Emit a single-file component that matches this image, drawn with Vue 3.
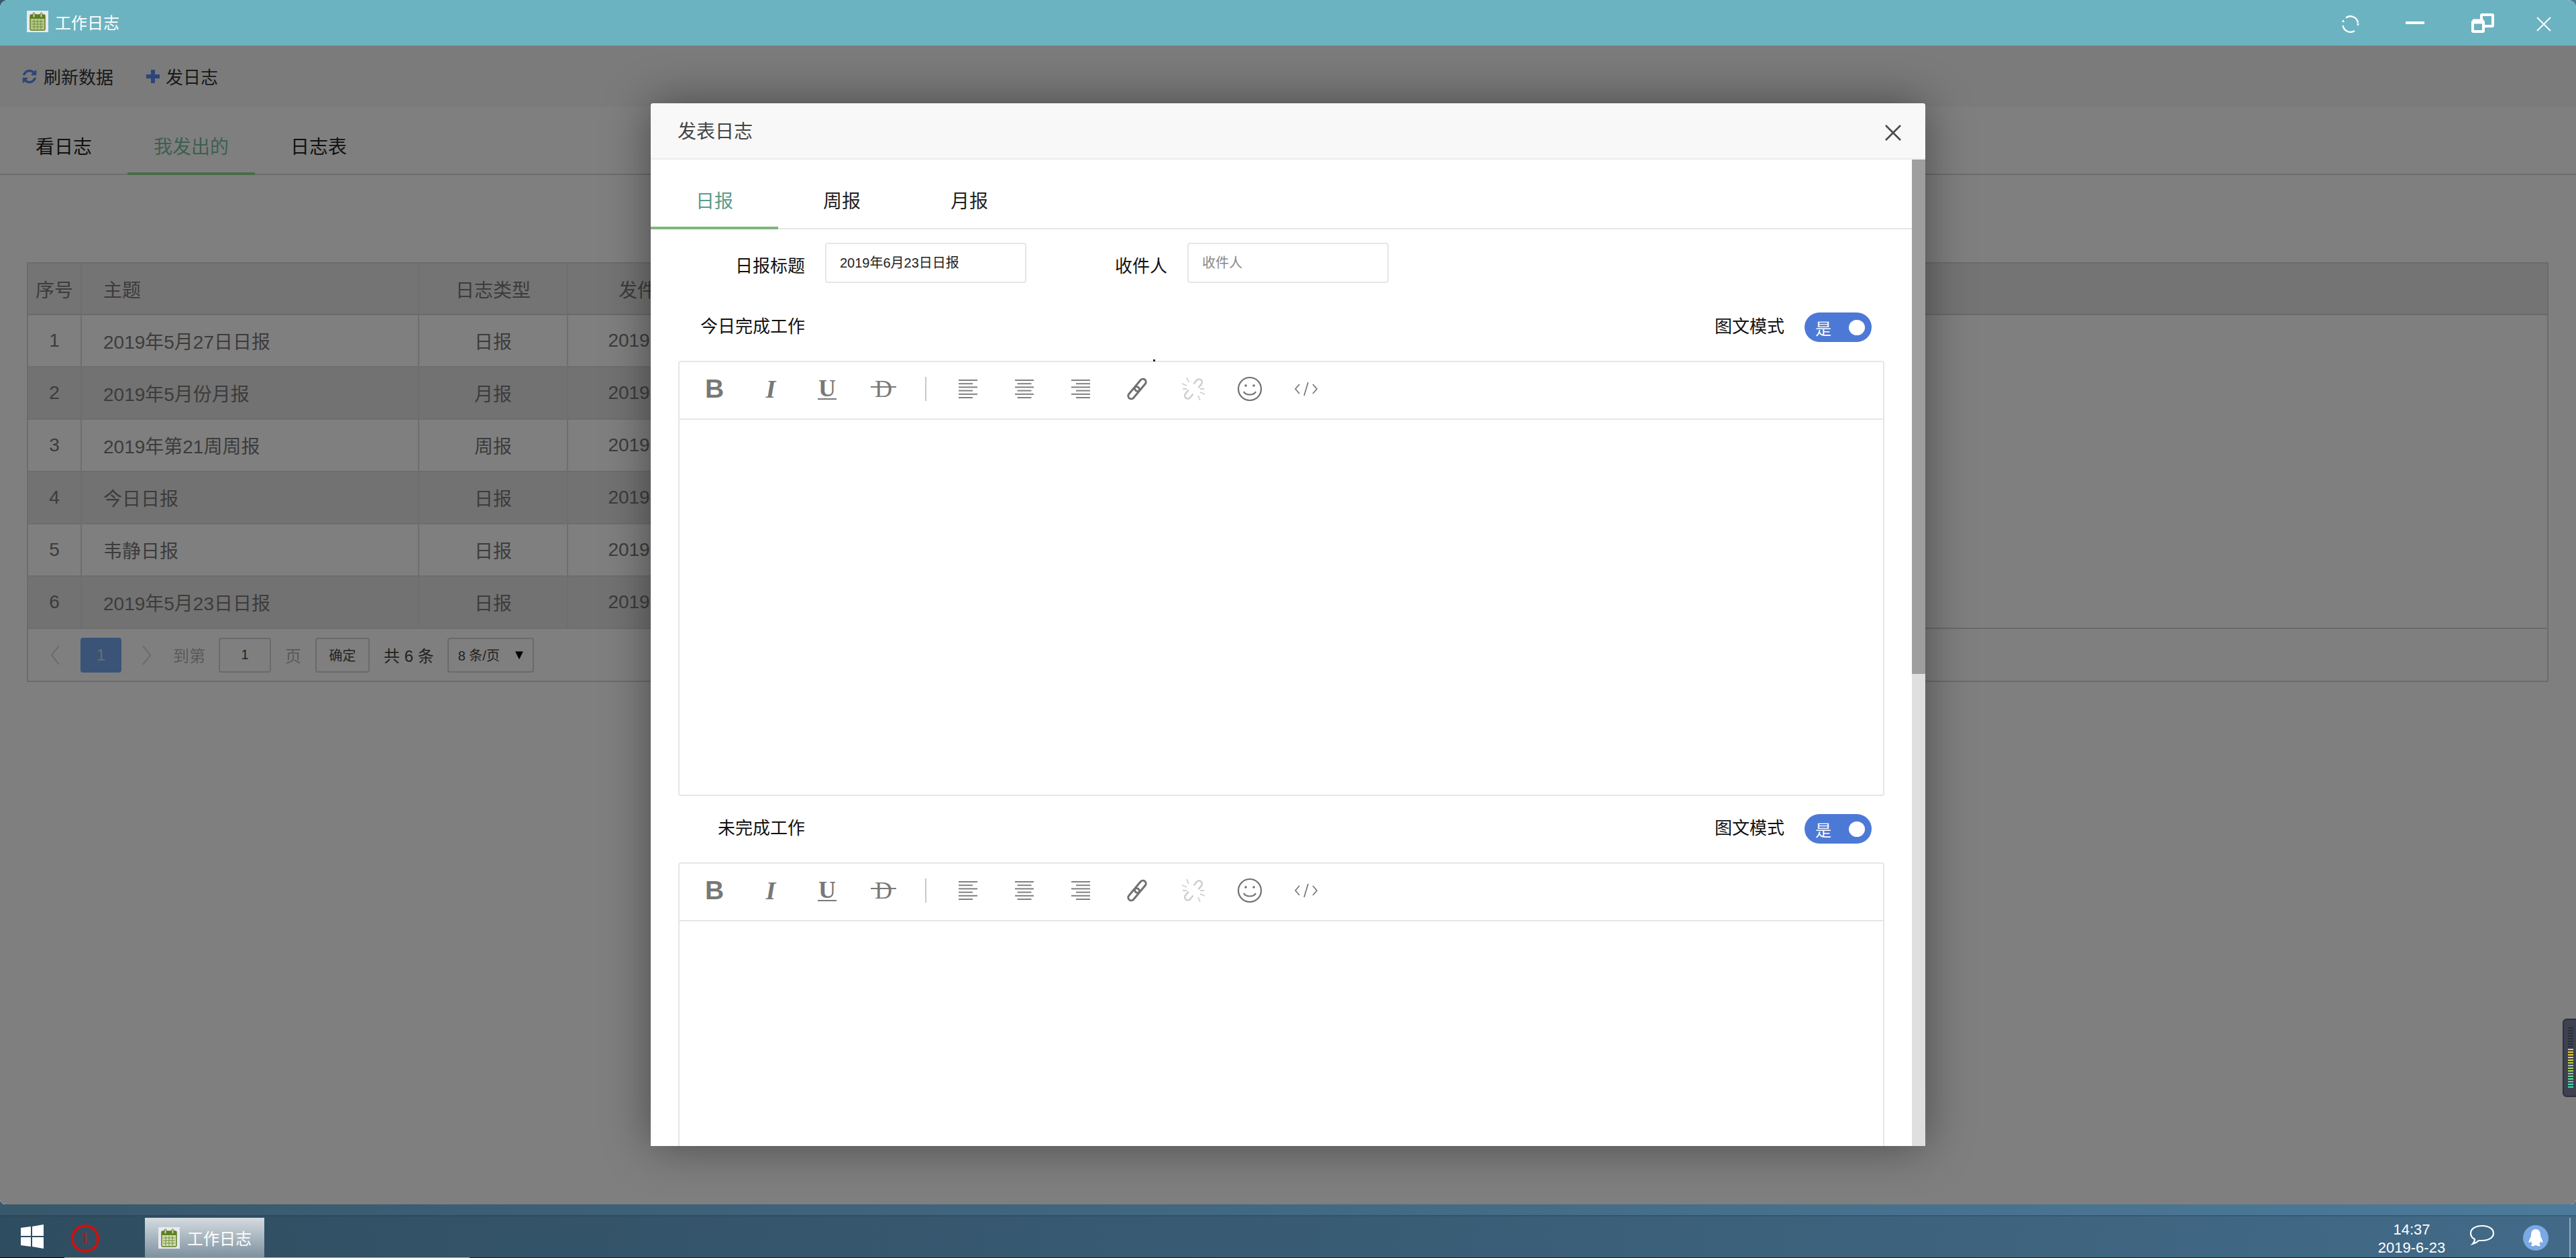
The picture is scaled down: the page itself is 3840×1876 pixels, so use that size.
<script setup>
const rows = [
  { n: 1, title: '2019年5月27日日报', type: '日报', date: '2019-05-27' },
  { n: 2, title: '2019年5月份月报', type: '月报', date: '2019-06-01' },
  { n: 3, title: '2019年第21周周报', type: '周报', date: '2019-05-24' },
  { n: 4, title: '今日日报', type: '日报', date: '2019-05-24' },
  { n: 5, title: '韦静日报', type: '日报', date: '2019-05-23' },
  { n: 6, title: '2019年5月23日日报', type: '日报', date: '2019-05-23' }
]
const editors = [
  { label: '今日完成工作' },
  { label: '未完成工作' }
]
const alignLines = [0, 1, 2, 3, 4, 5]
const lineX = (kind, i) => {
  const short = i % 2 === 1
  const w = short ? 21 : 28
  if (kind === 'left') return [6, 6 + w]
  if (kind === 'right') return [34 - w, 34]
  return [20 - w / 2, 20 + w / 2]
}
const meterBars = Array.from({ length: 23 }, (_, i) => {
  if (i < 8) return '#2c2e38'
  if (i < 13) return '#e8cf3e'
  if (i < 17) return '#a6d65c'
  if (i < 20) return '#6fd88c'
  return '#45dcb4'
})
const refreshPath = 'M1639 1056q0 5-1 7-64 268-268 434.5t-478 166.5q-146 0-282.5-55t-243.5-157l-129 129q-19 19-45 19t-45-19-19-45v-448q0-26 19-45t45-19h448q26 0 45 19t19 45-19 45l-137 137q71 66 161 102t187 36q134 0 250-65t186-179q11-17 53-117 8-23 30-23h192q13 0 22.5 9.5t9.5 22.5zm25-800v448q0 26-19 45t-45 19h-448q-26 0-45-19t-19-45 19-45l138-138q-148-137-349-137-134 0-250 65t-186 179q-11 17-53 117-8 23-30 23h-199q-13 0-22.5-9.5t-9.5-22.5v-7q65-268 270-434.5t480-166.5q146 0 284 55.5t245 156.5l130-129q19-19 45-19t45 19 19 45z'
</script>

<template>
  <div class="desktop">
    <div class="window">
      <header class="titlebar">
        <svg class="cal" viewBox="0 0 32 32">
          <rect width="32" height="32" fill="#e9e9ef" />
          <rect x="5" y="6" width="22" height="23" rx="2" fill="#b9c98f" stroke="#5c7f25" stroke-width="1.5" />
          <rect x="5" y="6" width="22" height="6" fill="#5c7f25" />
          <rect x="9" y="3" width="3" height="7" rx="1.5" fill="#c8d6a0" stroke="#5c7f25" />
          <rect x="20" y="3" width="3" height="7" rx="1.5" fill="#c8d6a0" stroke="#5c7f25" />
          <path d="M7 16h18M7 20h18M7 24h18M11 13v15M16 13v15M21 13v15" stroke="#6f8f3a" stroke-width="1" fill="none" />
        </svg>
        <span class="app-name">工作日志</span>
        <div class="win-btns">
          <div class="win-btn">
            <svg width="32" height="32" viewBox="0 0 32 32" class="win-refresh" fill="none" stroke="#fff" stroke-width="2.400">
              <path d="M27 14A11.500 11.500 0 0 0 9 6.500" />
              <path d="M4.500 18A11.500 11.500 0 0 0 22 26" />
              <path d="M25 15l2 4 2-4zM3 13l2-4 2 4z" fill="#fff" stroke="none" />
            </svg>
          </div>
          <div class="win-btn"><span class="min-bar"></span></div>
          <div class="win-btn">
            <svg width="48" height="48" viewBox="0 0 48 48" fill="none" stroke="#fff" stroke-width="4">
              <rect x="27" y="12" width="17" height="17" rx="1" />
              <rect x="14" y="22" width="16" height="15" rx="1" fill="#6cb3c1" />
              <path d="M14 22h16" stroke-width="7" />
            </svg>
          </div>
          <div class="win-btn">
            <svg width="24" height="24" viewBox="0 0 24 24" stroke="#fff" stroke-width="1.800" fill="none" class="win-close">
              <path d="M2 2l20 20M22 2L2 22" />
            </svg>
          </div>
        </div>
      </header>

      <div class="main">
        <div class="toolbar">
          <button class="tool">
            <svg class="tool-ico" width="24" height="24" viewBox="0 0 1792 1792"><path :d="refreshPath" fill="#5a8af0" /></svg>
            刷新数据
          </button>
          <button class="tool add">
            <svg class="tool-ico" width="22" height="22" viewBox="0 0 22 22"><path d="M8 1h6v7h7v6h-7v7H8v-7H1V8h7z" fill="#5a8af0" /></svg>
            发日志
          </button>
        </div>

        <nav class="page-tabs">
          <a class="page-tab">看日志</a>
          <a class="page-tab active">我发出的</a>
          <a class="page-tab">日志表</a>
        </nav>

        <section class="table">
          <div class="t-row t-head">
            <div class="cell c-n">序号</div>
            <div class="cell c-t">主题</div>
            <div class="cell c-y">日志类型</div>
            <div class="cell c-d">发件时间</div>
          </div>
          <div v-for="r in rows" :key="r.n" class="t-row" :class="{ even: r.n % 2 === 0 }">
            <div class="cell c-n">{{ r.n }}</div>
            <div class="cell c-t">{{ r.title }}</div>
            <div class="cell c-y">{{ r.type }}</div>
            <div class="cell c-d">{{ r.date }}</div>
          </div>
          <footer class="pager">
            <svg class="chev chev-prev" width="16" height="32" viewBox="0 0 16 32" fill="none" stroke="#d2d2d2" stroke-width="2"><path d="M14 2L3 16l11 14" /></svg>
            <span class="pg-cur">1</span>
            <svg class="chev chev-next" width="16" height="32" viewBox="0 0 16 32" fill="none" stroke="#d2d2d2" stroke-width="2"><path d="M2 2l11 14L2 30" /></svg>
            <span class="pg-txt to">到第</span>
            <span class="pg-box pg-in">1</span>
            <span class="pg-txt ye">页</span>
            <span class="pg-box pg-ok">确定</span>
            <span class="pg-total">共 6 条</span>
            <span class="pg-box pg-sel">8 条/页<i class="arrow">▼</i></span>
          </footer>
        </section>

        <div class="overlay"></div>

        <div class="modal">
          <div class="m-head">
            <span class="m-title">发表日志</span>
            <svg class="m-close" width="26" height="26" viewBox="0 0 26 26" fill="none" stroke="#4a4a4a" stroke-width="2.600"><path d="M2 2l22 22M24 2L2 24" /></svg>
          </div>
          <div class="m-body">
            <div class="m-scroll">
              <nav class="m-tabs">
                <a class="m-tab active">日报</a>
                <a class="m-tab">周报</a>
                <a class="m-tab">月报</a>
              </nav>
              <div class="form-row">
                <label class="f-label">日报标题</label>
                <div class="f-input">2019年6月23日日报</div>
                <label class="f-label second">收件人</label>
                <div class="f-input ph">收件人</div>
              </div>
              <div v-for="(e, i) in editors" :key="e.label" class="ed-block" :class="{ lead: i === 0 }">
                <div class="ed-head">
                  <label class="f-label">{{ e.label }}</label>
                  <span class="mode">图文模式</span>
                  <span class="toggle">
                    <b>是</b><i class="knob"></i>
                  </span>
                </div>
                <div class="editor">
                  <div class="ed-tools">
                    <span class="ti"><span class="g g-b">B</span></span>
                    <span class="ti"><span class="g g-i">I</span></span>
                    <span class="ti"><span class="g g-u">U</span></span>
                    <span class="ti"><span class="g g-d">D</span></span>
                    <span class="sep"></span>
                    <span v-for="k in ['left', 'center', 'right']" :key="k" class="ti">
                      <svg width="40" height="40" viewBox="0 0 40 40" stroke="#808080" stroke-width="2">
                        <line v-for="n in alignLines" :key="n" :x1="lineX(k, n)[0]" :x2="lineX(k, n)[1]" :y1="7 + n * 5.2" :y2="7 + n * 5.2" />
                      </svg>
                    </span>
                    <span class="ti">
                      <svg width="40" height="40" viewBox="0 0 40 40" fill="none" stroke="#707070" stroke-width="3">
                        <g transform="rotate(40 20 20)">
                          <rect x="15.500" y="2" width="9" height="21" rx="4.500" />
                          <rect x="15.500" y="17" width="9" height="21" rx="4.500" />
                        </g>
                      </svg>
                    </span>
                    <span class="ti">
                      <svg width="40" height="40" viewBox="0 0 40 40" fill="none" stroke="#cfcfcf" stroke-width="2.600">
                        <g transform="rotate(40 20 20)">
                          <path d="M15.500 14V7a4.500 4.500 0 0 1 9 0v7" />
                          <path d="M15.500 26v7a4.500 4.500 0 0 0 9 0v-7" />
                        </g>
                        <path d="M10 3l3 7M3 12l7 3M4 20h6M30 37l-3-7M37 28l-7-3M36 20h-6" stroke-width="1.800" />
                      </svg>
                    </span>
                    <span class="ti">
                      <svg width="40" height="40" viewBox="0 0 40 40" fill="none" stroke="#707070" stroke-width="2.200">
                        <circle cx="20" cy="20" r="17" />
                        <circle cx="14" cy="15" r="1.800" fill="#707070" stroke="none" />
                        <circle cx="26" cy="15" r="1.800" fill="#707070" stroke="none" />
                        <path d="M11 24c3 6 15 6 18 0" />
                      </svg>
                    </span>
                    <span class="ti">
                      <svg width="40" height="40" viewBox="0 0 40 40" fill="none" stroke="#707070" stroke-width="1.600">
                        <path d="M10 13l-6 7 6 7M30 13l6 7-6 7M23 10l-6 20" />
                      </svg>
                    </span>
                  </div>
                  <div class="ed-area"></div>
                </div>
              </div>
            </div>
            <div class="scrollbar"><div class="thumb"></div></div>
          </div>
          <i class="speck"></i>
        </div>
      </div>
    </div>

    <footer class="taskbar">
      <div class="strip"></div>
      <div class="task-row">
        <svg class="win-logo" width="34" height="36" viewBox="0 0 34 36" fill="#fff"><path d="M0 5l15-2v14H0zM17 3l17-3v17H17zM0 19h15v14L0 31zM17 19h17v17l-17-3z" /></svg>
        <span class="notice">1</span>
        <div class="task-app">
          <svg class="cal small" viewBox="0 0 32 32">
            <rect width="32" height="32" fill="#e9e9ef" />
            <rect x="5" y="6" width="22" height="23" rx="2" fill="#d5ddb5" stroke="#5c7f25" stroke-width="1.500" />
            <rect x="5" y="6" width="22" height="6" fill="#5c7f25" />
            <rect x="9" y="3" width="3" height="7" rx="1.500" fill="#c8d6a0" stroke="#5c7f25" />
            <rect x="20" y="3" width="3" height="7" rx="1.500" fill="#c8d6a0" stroke="#5c7f25" />
            <path d="M7 16h18M7 20h18M7 24h18M11 13v15M16 13v15M21 13v15" stroke="#6f8f3a" stroke-width="1" fill="none" />
          </svg>
          <span>工作日志</span>
        </div>
        <div class="clock"><div>14:37</div><div>2019-6-23</div></div>
        <svg class="bubble" width="38" height="32" viewBox="0 0 38 32" fill="none" stroke="#fff" stroke-width="2.200"><path d="M19 2c9 0 17 4 17 11s-8 11-17 11c-2 0-3 0-5 0-2 2-5 4-9 5 2-2 3-4 3-7C4 20 2 17 2 13 2 6 10 2 19 2z" /></svg>
        <span class="qq">
          <svg width="26" height="28" viewBox="0 0 26 28" fill="#fff"><path d="M13 1c5 0 7 4 7 9 0 2 2 5 3 8 1 2 0 4-1 3l-2-2c0 2-1 3-2 4 2 1 3 2 1 3-2 1-4 0-5-1h-2c-1 1-3 2-5 1-2-1-1-2 1-3-1-1-2-2-2-4l-2 2c-1 1-2-1-1-3 1-3 3-6 3-8 0-5 2-9 7-9z" /></svg>
        </span>
        <i class="show-desk"></i>
      </div>
      <div class="edge"></div>
    </footer>

    <aside class="meter">
      <i v-for="(c, i) in meterBars" :key="i" :style="{ background: c }"></i>
    </aside>
  </div>
</template>

<style>
html, body { margin: 0; padding: 0; overflow: hidden; }
</style>

<style scoped>
* { box-sizing: border-box; }
.desktop {
  position: relative;
  width: 3840px;
  height: 1876px;
  display: flex;
  flex-direction: column;
  overflow: hidden;
  font-family: "Liberation Sans", "Noto Sans CJK SC", sans-serif;
  background: linear-gradient(90deg, #38586c, #4c7a9a);
}
.window {
  height: 1796px;
  display: flex;
  flex-direction: column;
  border-radius: 12px 12px 8px 8px;
  overflow: hidden;
  background: #fff;
}
.titlebar {
  height: 68px;
  flex: none;
  display: flex;
  align-items: center;
  padding-left: 40px;
  background: #6cb3c1;
  color: #fff;
}
.cal { width: 32px; height: 32px; flex: none; margin-top: -4px; }
.app-name { font-size: 24px; margin-left: 10px; margin-top: -4px; }
.win-btns { margin-left: auto; display: flex; }
.win-btn { width: 96px; height: 68px; display: flex; align-items: center; justify-content: center; }
.win-refresh { margin-top: 4px; }
.win-close { margin-top: 4px; }
.min-bar { width: 28px; height: 4px; background: #fff; }

.main { position: relative; flex: 1; background: #fff; }
.toolbar {
  height: 91px;
  display: flex;
  align-items: center;
  padding-left: 32px;
  background: #f6f6f6;
}
.tool {
  display: flex;
  align-items: center;
  border: 0;
  padding: 0;
  background: none;
  font: inherit;
  font-size: 26px;
  color: #333;
}
.tool-ico { margin-right: 9px; }
.add { margin-left: 48px; }
.add .tool-ico { margin-right: 8px; }
.page-tabs { height: 102px; display: flex; border-bottom: 2px solid #d8d8d8; }
.page-tab {
  width: 190px;
  height: 102px;
  padding-top: 38px;
  line-height: 46px;
  text-align: center;
  font-size: 28px;
  color: #222;
}
.page-tab.active { color: #7cbea0; border-bottom: 4px solid #94d68e; }
.table {
  margin: 130px 41px 0 40px;
  border: 2px solid #d8d8d8;
}
.t-row { display: flex; height: 78px; font-size: 28px; color: #787878; }
.t-head { height: 77px; background: #e8e8e8; border-bottom: 2px solid #d4d4d4; }
.cell {
  display: flex;
  align-items: center;
  justify-content: center;
  height: 100%;
  border-right: 2px solid #dcdcdc;
  background: #fff;
}
.t-row:not(.t-head) .cell { border-bottom: 2px solid #dcdcdc; }
.t-head .cell { background: #e8e8e8; }
.t-row.even .cell { background: #e4e4e4; }
.c-n { width: 80px; }
.c-t { width: 503px; justify-content: flex-start; padding-left: 32px; }
.c-y { width: 222px; }
.c-d { width: 262px; border-right: 0; }
.pager {
  height: 79px;
  display: flex;
  align-items: center;
  border-top: 2px solid #d4d4d4;
  margin-top: -2px;
  font-size: 24px;
}
.chev { flex: none; }
.chev-prev { margin-left: 32px; }
.chev-next { margin-left: 30px; }
.pg-cur {
  width: 61px;
  height: 52px;
  margin-left: 30px;
  border-radius: 4px;
  background: #74a8f0;
  color: #d8d8d8;
  display: flex;
  align-items: center;
  justify-content: center;
}
.pg-txt { color: #b4b4b4; }
.to { margin-left: 31px; }
.ye { margin-left: 21px; }
.pg-box {
  height: 52px;
  border: 2px solid #d4d4d4;
  border-radius: 4px;
  display: flex;
  align-items: center;
  justify-content: center;
  color: #444;
}
.pg-in { width: 78px; margin-left: 20px; font-size: 20px; }
.pg-ok { width: 81px; margin-left: 21px; font-size: 20px; }
.pg-total { margin-left: 21px; color: #444; }
.pg-sel { width: 129px; margin-left: 20px; font-size: 20px; justify-content: flex-start; padding-left: 14px; position: relative; }
.arrow { position: absolute; right: 10px; top: 12px; font-style: normal; font-size: 20px; color: #000; }

.overlay { position: absolute; inset: 0; background: rgba(0, 0, 0, 0.5); }

.modal {
  position: absolute;
  left: 970px;
  top: 86px;
  width: 1900px;
  height: 1555px;
  display: flex;
  flex-direction: column;
  background: #fff;
  border-radius: 4px 4px 0 0;
  box-shadow: 0 0 70px rgba(0, 0, 0, 0.42);
}
.m-head {
  height: 84px;
  flex: none;
  display: flex;
  align-items: center;
  justify-content: space-between;
  padding: 0 35px 0 40px;
  background: #f8f8f8;
  border-bottom: 2px solid #ececec;
  border-radius: 4px 4px 0 0;
}
.m-title { font-size: 28px; color: #444; margin-top: -2px; }
.m-close { margin-top: 6px; }
.m-body { flex: 1; display: flex; overflow: hidden; }
.m-scroll { flex: 1; min-width: 0; overflow: hidden; }
.scrollbar { width: 20px; flex: none; background: #dfdfdf; }
.thumb { height: 767px; background: #9e9e9e; }
.m-tabs { height: 104px; display: flex; border-bottom: 2px solid #e6e6e6; }
.m-tab {
  width: 190px;
  height: 104px;
  padding-top: 40px;
  line-height: 46px;
  text-align: center;
  font-size: 28px;
  color: #222;
}
.m-tab.active { color: #5a9a8a; border-bottom: 4px solid #7fb67a; }
.form-row { display: flex; align-items: center; padding-top: 20px; }
.f-label { width: 230px; text-align: right; font-size: 26px; color: #111; margin-top: 4px; flex: none; }
.f-label.second { width: 210px; }
.f-input {
  width: 300px;
  height: 60px;
  margin-left: 30px;
  padding: 0 0 4px 20px;
  display: flex;
  align-items: center;
  border: 2px solid #e6e6e6;
  border-radius: 4px;
  font-size: 20px;
  color: #222;
}
.f-input.ph { color: #888; }
.ed-block { padding-top: 27px; }
.ed-block.lead { padding-top: 44px; }
.ed-head { height: 44px; display: flex; align-items: center; margin-bottom: 28px; }
.ed-head .f-label { margin-top: -8px; }
.mode { margin-left: auto; font-size: 26px; color: #111; margin-top: -8px; }
.toggle {
  width: 100px;
  height: 44px;
  margin: 0 60px 0 30px;
  padding-left: 16px;
  border-radius: 22px;
  background: #4d79d6;
  color: #fff;
  display: flex;
  align-items: center;
  justify-content: space-between;
  font-size: 24px;
}
.toggle b { font-weight: 400; }
.knob { width: 24px; height: 23px; margin-right: 10px; border-radius: 50%; background: #fff; }
.editor {
  width: 1798px;
  height: 649px;
  margin-left: 41px;
  border: 2px solid #e6e6e6;
  border-radius: 4px;
  display: flex;
  flex-direction: column;
}
.ed-tools {
  height: 86px;
  flex: none;
  display: flex;
  align-items: center;
  padding: 0 0 4px 10px;
  border-bottom: 2px solid #e6e6e6;
}
.ti { width: 84px; height: 40px; display: flex; align-items: center; justify-content: center; flex: none; }
.g { color: #787878; line-height: 1; display: inline-block; }
.g-b { font: 700 39px "Liberation Sans", sans-serif; }
.g-i { font: italic 700 38px "Liberation Serif", serif; }
.g-u { font: 700 36px "Liberation Serif", serif; border-bottom: 2px solid #787878; line-height: 30px; padding: 0 1px; }
.g-d { font: 400 36px "Liberation Serif", serif; position: relative; }
.g-d::after { content: ""; position: absolute; left: -6px; right: -6px; top: 17px; height: 2px; background: #787878; }
.sep { width: 42px; height: 36px; flex: none; position: relative; }
.sep::after { content: ""; position: absolute; left: 20px; top: 0; width: 2px; height: 36px; background: #c8c8c8; }
.ed-area { flex: 1; }
.speck { position: absolute; left: 749px; top: 382px; width: 3px; height: 3px; background: #222; }

.taskbar { position: relative; flex: 1; display: flex; flex-direction: column; }
.strip { height: 18px; flex: none; border-bottom: 2px solid rgba(20, 40, 55, 0.35); }
.task-row {
  flex: 1;
  display: flex;
  align-items: flex-end;
  background: linear-gradient(90deg, #2f4d60, #426a88);
  color: #fff;
}
.win-logo { position: absolute; left: 31px; top: 30px; }
.notice {
  position: absolute;
  left: 106px;
  top: 30px;
  width: 42px;
  height: 42px;
  border: 4px solid #cc1111;
  border-radius: 50%;
  color: #cc1111;
  font-size: 24px;
  display: flex;
  align-items: center;
  justify-content: center;
}
.task-app {
  margin-left: 216px;
  width: 178px;
  height: 59px;
  margin-bottom: 1px;
  padding-left: 20px;
  display: flex;
  align-items: center;
  gap: 11px;
  font-size: 24px;
  background: linear-gradient(180deg, #d4dbe0, #7e919f);
}
.cal.small { margin-top: 0; }
.clock {
  position: absolute;
  left: 3520px;
  top: 24px;
  width: 150px;
  font-size: 22px;
  line-height: 27px;
  text-align: center;
}
.bubble { position: absolute; left: 3681px; top: 30px; }
.qq {
  position: absolute;
  left: 3761px;
  top: 31px;
  width: 38px;
  height: 38px;
  border-radius: 50%;
  background: #7aa9e3;
  display: flex;
  align-items: center;
  justify-content: center;
}
.show-desk { position: absolute; left: 3830px; top: 20px; bottom: 0; width: 2px; background: #94a9bb; }
.edge {
  position: absolute;
  left: 0;
  right: 0;
  bottom: 0;
  height: 1px;
  background: linear-gradient(90deg, #000 96px, #a5b0b8 96px, #a5b0b8 700px, #16242e 700px);
}
.meter {
  position: absolute;
  left: 3820px;
  top: 1519px;
  width: 24px;
  height: 117px;
  padding: 11px 0 0 6px;
  border-radius: 6px 0 0 6px;
  background: #3d4150;
  border: 2px solid #2d303c;
  display: flex;
  flex-direction: column;
  gap: 2px;
}
.meter i { display: block; width: 8px; height: 2px; flex: none; }
</style>
